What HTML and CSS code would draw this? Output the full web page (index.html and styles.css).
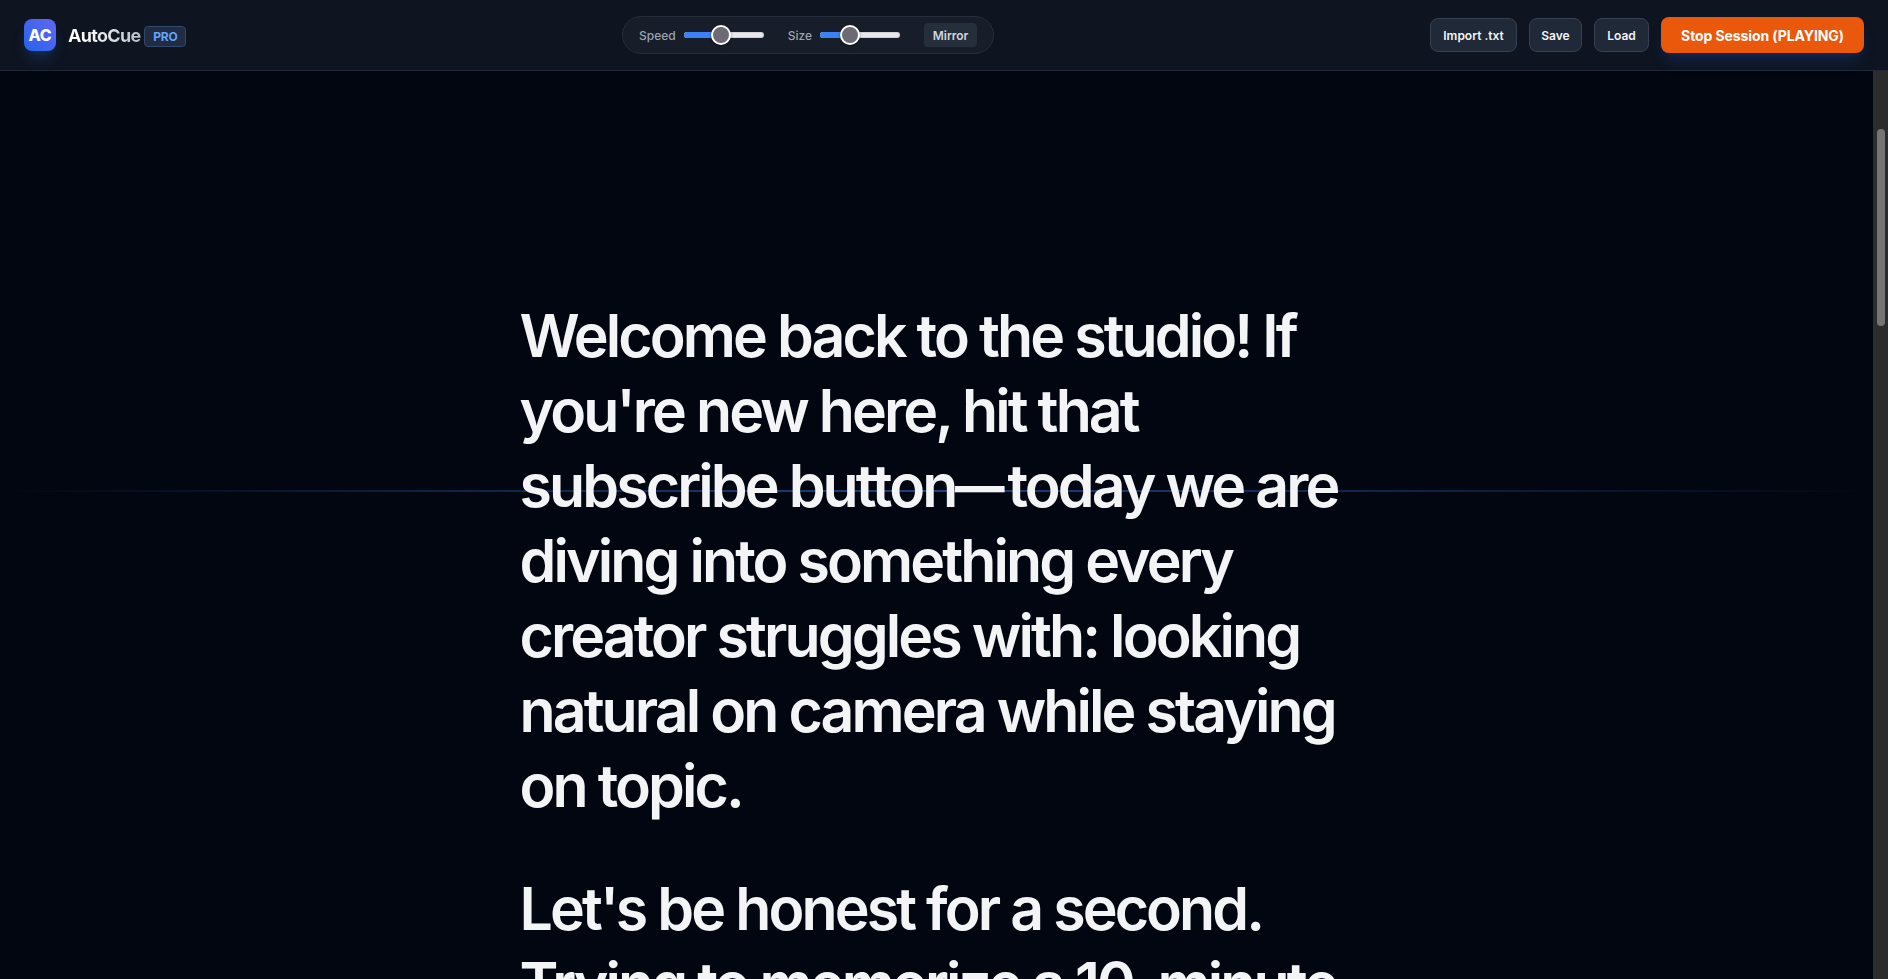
FILE: index.html
```html
<!DOCTYPE html>
<html lang="en">
<head>
    <meta charset="UTF-8">
    <meta name="viewport" content="width=device-width, initial-scale=1.0">
    <title>AutoCue Pro</title>
    <link rel="stylesheet" href="styles.css">
</head>
<body>
    <header class="topbar">
        <div class="brand">
            <div class="logo">AC</div>
            <h1 class="title"><span class="name">AutoCue</span><span class="badge">PRO</span></h1>
        </div>

        <div class="controls">
            <label class="control">Speed
                <span class="slider speed"><span class="fill"></span><span class="thumb"></span></span>
            </label>
            <label class="control">Size
                <span class="slider size"><span class="fill"></span><span class="thumb"></span></span>
            </label>
            <button class="mirror">Mirror</button>
        </div>

        <div class="actions">
            <button class="btn import">Import .txt</button>
            <button class="btn save">Save</button>
            <button class="btn load">Load</button>
            <button class="btn-stop">Stop Session (PLAYING)</button>
        </div>
    </header>

    <main class="stage">
        <div class="prompter">
            <div class="guide"></div>
            <div class="script">
                <p>
                    Welcome back to the studio! If<br>
                    you're new here, hit that<br>
                    subscribe button<span class="dash">—</span>today we are<br>
                    diving into something every<br>
                    creator struggles with: looking<br>
                    natural on camera while staying<br>
                    on topic.
                </p>
                <p>
                    Let's be honest for a second.<br>
                    Trying to memorize a 10-minute
                </p>
            </div>
        </div>
        <div class="scrollbar"><div class="scroll-thumb"></div></div>
    </main>
</body>
</html>
```

FILE: styles.css
```css
* {
    box-sizing: border-box;
}

body {
    margin: 0;
    height: 100vh;
    display: flex;
    flex-direction: column;
    overflow: hidden;
    background: #020610;
    color: #f3f4f6;
    font-family: Inter, "Liberation Sans", sans-serif;
}

button {
    font-family: inherit;
    margin: 0;
    padding: 0;
    cursor: pointer;
    white-space: nowrap;
}

/* Top bar */
.topbar {
    flex: none;
    display: grid;
    grid-template-columns: 598px 372px 1fr;
    align-items: center;
    height: 71px;
    padding: 0 24px;
    background: #0e1420;
    border-bottom: 1px solid #1f2937;
}

.brand {
    display: flex;
    align-items: center;
    gap: 12px;
}

.logo {
    width: 32px;
    height: 32px;
    border-radius: 8px;
    background: linear-gradient(to top right, #2563eb, #6366f1);
    box-shadow: 0 10px 15px -3px rgba(59, 130, 246, 0.2), 0 4px 6px -4px rgba(59, 130, 246, 0.2);
    color: #fff;
    font-size: 16px;
    font-weight: 800;
    line-height: 32px;
    letter-spacing: -0.2px;
    text-align: center;
}

.title {
    display: flex;
    align-items: center;
    margin: 0;
    font-size: 18px;
    font-weight: 700;
    letter-spacing: -0.7px;
}

.name {
    padding-right: 1px;
    background: linear-gradient(to right, #fff 20%, #b8bcc5);
    -webkit-background-clip: text;
    background-clip: text;
    color: transparent;
}

.badge {
    width: 42px;
    height: 21px;
    margin: 3px 0 0 3px;
    border: 1px solid #33486d;
    border-radius: 4px;
    background: #212b41;
    color: #60a5fa;
    font-size: 12px;
    line-height: 20px;
    letter-spacing: -0.2px;
    text-align: center;
}

.controls {
    display: flex;
    align-items: center;
    height: 38px;
    padding: 0 16px;
    border: 1px solid #252e3a;
    border-radius: 19px;
    background: #171e2a;
}

.control {
    display: flex;
    align-items: center;
    gap: 8px;
    margin-right: 24px;
    color: #9ca3af;
    font-size: 12px;
    font-weight: 500;
}

.slider {
    position: relative;
    width: 80px;
    height: 6px;
    border-radius: 3px;
    background: #e8e8ec;
    box-shadow: inset 0 0 0 1px rgba(120, 120, 130, 0.2);
}

.fill {
    display: block;
    height: 6px;
    border-radius: 3px;
    background: #3b82f6;
}

.thumb {
    position: absolute;
    top: -7px;
    width: 20px;
    height: 20px;
    border: 2px solid #fff;
    border-radius: 50%;
    background: #6b6a75;
    box-shadow: 0 1px 3px rgba(0, 0, 0, 0.4);
}

.speed .fill {
    width: 36px;
}

.speed .thumb {
    left: 27px;
}

.size .fill {
    width: 30px;
}

.size .thumb {
    left: 20px;
}

.mirror {
    width: 53px;
    height: 24px;
    border: 0;
    border-radius: 4px;
    background: #252e3b;
    color: #d1d5db;
    font-size: 12px;
    font-weight: 600;
}

.actions {
    display: flex;
    align-items: center;
    justify-content: flex-end;
    gap: 12px;
}

.btn {
    height: 34px;
    border: 1px solid #374151;
    border-radius: 8px;
    background: #1f2937;
    color: #f3f4f6;
    font-size: 12px;
    font-weight: 600;
}

.import {
    width: 87px;
}

.save {
    width: 53px;
}

.load {
    width: 55px;
}

.btn-stop {
    width: 203px;
    height: 36px;
    border: 0;
    border-radius: 8px;
    background: #ea580c;
    box-shadow: 0 10px 15px -3px rgba(37, 99, 235, 0.2), 0 4px 6px -4px rgba(37, 99, 235, 0.2);
    color: #fff;
    font-size: 14px;
    font-weight: 700;
    letter-spacing: -0.1px;
}

/* Prompter */
.stage {
    flex: 1;
    min-height: 0;
    display: flex;
}

.prompter {
    position: relative;
    flex: 1;
    overflow: hidden;
}

/* reading line, sits behind the script text */
.guide {
    position: absolute;
    top: 419px;
    left: 0;
    right: 0;
    height: 2px;
    background: linear-gradient(to right, transparent, #1e4080, transparent);
}

.script {
    position: relative;
    width: 834px;
    margin: 0 auto;
    padding-top: 227px;
    font-size: 59px;
    font-weight: 600;
    font-variation-settings: "opsz" 32;
    line-height: 75px;
    letter-spacing: -2.9px;
    white-space: nowrap;
}

.script p {
    margin: 0 0 48px;
}

.dash {
    display: inline-block;
    width: 49px;
    margin-right: 3px;
    transform: scaleX(0.84);
    transform-origin: left;
}

.scrollbar {
    width: 15px;
    padding: 58px 3px 0 4px;
    background: #2c2c2c;
}

.scroll-thumb {
    height: 197px;
    border-radius: 4px;
    background: #757575;
}
```
